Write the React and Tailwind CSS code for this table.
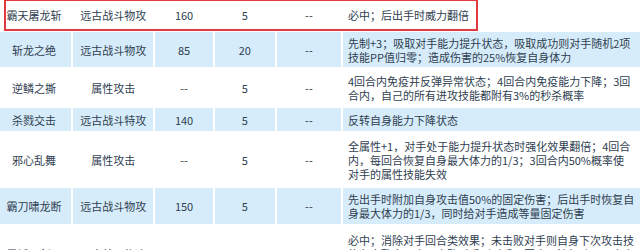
const rows = [
  {
    name: "霸天屠龙斩",
    type: "远古战斗物攻",
    power: "160",
    pp: "5",
    prio: "--",
    effect: ["必中；后出手时威力翻倍"],
    h: "h-[30px]",
  },
  {
    name: "斩龙之绝",
    type: "远古战斗物攻",
    power: "85",
    pp: "20",
    prio: "--",
    effect: [
      "先制+3；吸取对手能力提升状态，吸取成功则对手随机2项",
      "技能PP值归零；造成伤害的25%恢复自身体力",
    ],
    h: "h-[35px]",
  },
  {
    name: "逆鳞之撕",
    type: "属性攻击",
    power: "--",
    pp: "5",
    prio: "--",
    effect: [
      "4回合内免疫并反弹异常状态；4回合内免疫能力下降；3回",
      "合内，自己的所有进攻技能都附有3%的秒杀概率",
    ],
    h: "h-[37px]",
  },
  {
    name: "杀戮交击",
    type: "远古战斗特攻",
    power: "140",
    pp: "5",
    prio: "--",
    effect: ["反转自身能力下降状态"],
    h: "h-[23px]",
  },
  {
    name: "邪心乱舞",
    type: "属性攻击",
    power: "--",
    pp: "5",
    prio: "--",
    effect: [
      "全属性+1，对手处于能力提升状态时强化效果翻倍；4回合",
      "内，每回合恢复自身最大体力的1/3；3回合内50%概率使",
      "对手的属性技能失效",
    ],
    h: "h-[53px]",
  },
  {
    name: "霸刀啸龙断",
    type: "远古战斗物攻",
    power: "150",
    pp: "5",
    prio: "--",
    effect: [
      "先出手时附加自身攻击值50%的固定伤害；后出手时恢复自",
      "身最大体力的1/3，同时给对手造成等量固定伤害",
    ],
    h: "h-[36px]",
  },
  {
    name: "霸域·剑斗",
    type: "远古战斗物攻",
    power: "160",
    pp: "5",
    prio: "--",
    effect: [
      "必中；消除对手回合类效果；未击败对手则自身下次攻击技",
      "能必定致命一击；击败对手则对手下回合无法行动，且自身",
      "下回合先制+2",
    ],
    h: "h-[56px]",
  },
];

export default function App() {
  return (
    <div
      className="relative w-[640px] h-[250px] overflow-hidden bg-white text-[11px] leading-[14px] text-[#2f3e50]"
      style={{ fontFamily: '"Noto Sans CJK SC", "Noto Sans", sans-serif' }}
    >
      <table className="table-fixed border-separate border-spacing-[2px] ml-[-5px] mt-[-2px] w-[651px]">
        <colgroup>
          <col className="w-[74px]" />
          <col className="w-[80px]" />
          <col className="w-[57px]" />
          <col className="w-[60px]" />
          <col className="w-[64px]" />
          <col className="w-[300px]" />
        </colgroup>
        <tbody>
          {rows.map((r, i) => {
            const bg = i % 2 === 1 ? "bg-[#d6ecfa]" : "bg-white";
            return (
              <tr key={r.name} className={r.h}>
                <td className={`${bg} p-0 text-center align-middle whitespace-nowrap`}>{r.name}</td>
                <td className={`${bg} p-0 text-center align-middle whitespace-nowrap`}>{r.type}</td>
                <td className={`${bg} p-0 text-center align-middle`}>{r.power}</td>
                <td className={`${bg} p-0 text-center align-middle`}>{r.pp}</td>
                <td className={`${bg} p-0 text-center align-middle`}>{r.prio}</td>
                <td className={`${bg} py-0 pl-[5px] pr-0 align-middle whitespace-nowrap`}>
                  {r.effect.map((line) => (
                    <div key={line}>{line}</div>
                  ))}
                </td>
              </tr>
            );
          })}
        </tbody>
      </table>

      {/* highlight annotation */}
      <div className="absolute left-[4px] top-[-1px] w-[474px] h-[32px] border-2 border-[#e0393e] pointer-events-none" />
    </div>
  );
}
